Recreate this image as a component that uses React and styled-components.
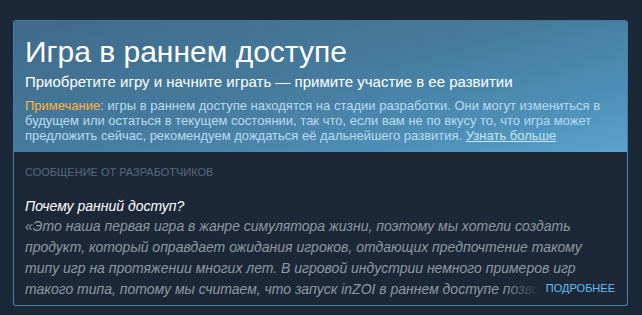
import React from "react";
import styled, { createGlobalStyle } from "styled-components";

const Global = createGlobalStyle`
  html, body {
    margin: 0;
    padding: 0;
    background: #1b2838;
    font-family: "Liberation Sans", Arial, sans-serif;
  }
`;

const Page = styled.div`
  width: 642px;
  height: 315px;
  padding: 20px 0 0 13px;
  box-sizing: border-box;
  overflow: hidden;
`;

const Card = styled.div`
  width: 615px;
  height: 286px;
  box-sizing: border-box;
  border: 1px solid #4a7fab;
  border-top-color: #4a7595;
  border-radius: 3px;
  overflow: hidden;
  display: flex;
  flex-direction: column;
  background: #1c2838;
`;

const Header = styled.div`
  padding: 13px 11px 9px 11px;
  background: linear-gradient(165deg, #3f6b8b 0%, #457a9c 45%, #4f90b8 80%, #5aa3cc 100%);
`;

const Title = styled.h1`
  margin: 0;
  font-size: 30px;
  font-weight: 400;
  line-height: 36px;
  color: #ffffff;
`;

const Subtitle = styled.div`
  margin-top: 3px;
  font-size: 15px;
  line-height: 18px;
  color: #ffffff;
`;

const Note = styled.p`
  margin: 7px 0 0;
  font-size: 13px;
  line-height: 15px;
  color: #b9dcf0;

  span {
    color: #ffb43a;
  }

  a {
    color: #c7e6f7;
    text-decoration: underline;
  }
`;

const Body = styled.div`
  flex: 1;
  padding: 14px 11px 0 11px;
  position: relative;
`;

const Label = styled.div`
  font-size: 11px;
  line-height: 13px;
  color: #58697a;
  text-transform: uppercase;
`;

const Question = styled.div`
  margin-top: 17px;
  font-size: 14px;
  line-height: 20px;
  font-style: italic;
  color: #ffffff;
`;

const Quote = styled.div`
  font-size: 14px;
  line-height: 21px;
  font-style: italic;
  color: #8f98a0;
  height: 84px;
  overflow: hidden;
  width: 590px;
`;

const More = styled.div`
  position: absolute;
  right: 12px;
  bottom: 10px;
  font-size: 11px;
  line-height: 13px;
  color: #66c0f4;
  text-transform: uppercase;
  padding-left: 42px;
  background: linear-gradient(90deg, rgba(28, 40, 56, 0) 0%, #1c2838 36px);
`;

export default function App() {
  return (
    <>
      <Global />
      <Page>
        <Card>
          <Header>
            <Title>Игра в раннем доступе</Title>
            <Subtitle>Приобретите игру и начните играть — примите участие в ее развитии</Subtitle>
            <Note>
              <span>Примечание</span>: игры в раннем доступе находятся на стадии разработки. Они могут
              измениться в будущем или остаться в текущем состоянии, так что, если вам не по вкусу то, что
              игра может предложить сейчас, рекомендуем дождаться её дальнейшего развития.{" "}
              <a href="#">Узнать больше</a>
            </Note>
          </Header>
          <Body>
            <Label>Сообщение от разработчиков</Label>
            <Question>Почему ранний доступ?</Question>
            <Quote>
              «Это наша первая игра в жанре симулятора жизни, поэтому мы хотели создать продукт, который
              оправдает ожидания игроков, отдающих предпочтение такому типу игр на протяжении многих лет. В
              игровой индустрии немного примеров игр такого типа, потому мы считаем, что запуск inZOI в раннем
              доступе позволит нам вместе с игроками создать игру, о которой они мечтали.»
            </Quote>
            <More>Подробнее</More>
          </Body>
        </Card>
      </Page>
    </>
  );
}
